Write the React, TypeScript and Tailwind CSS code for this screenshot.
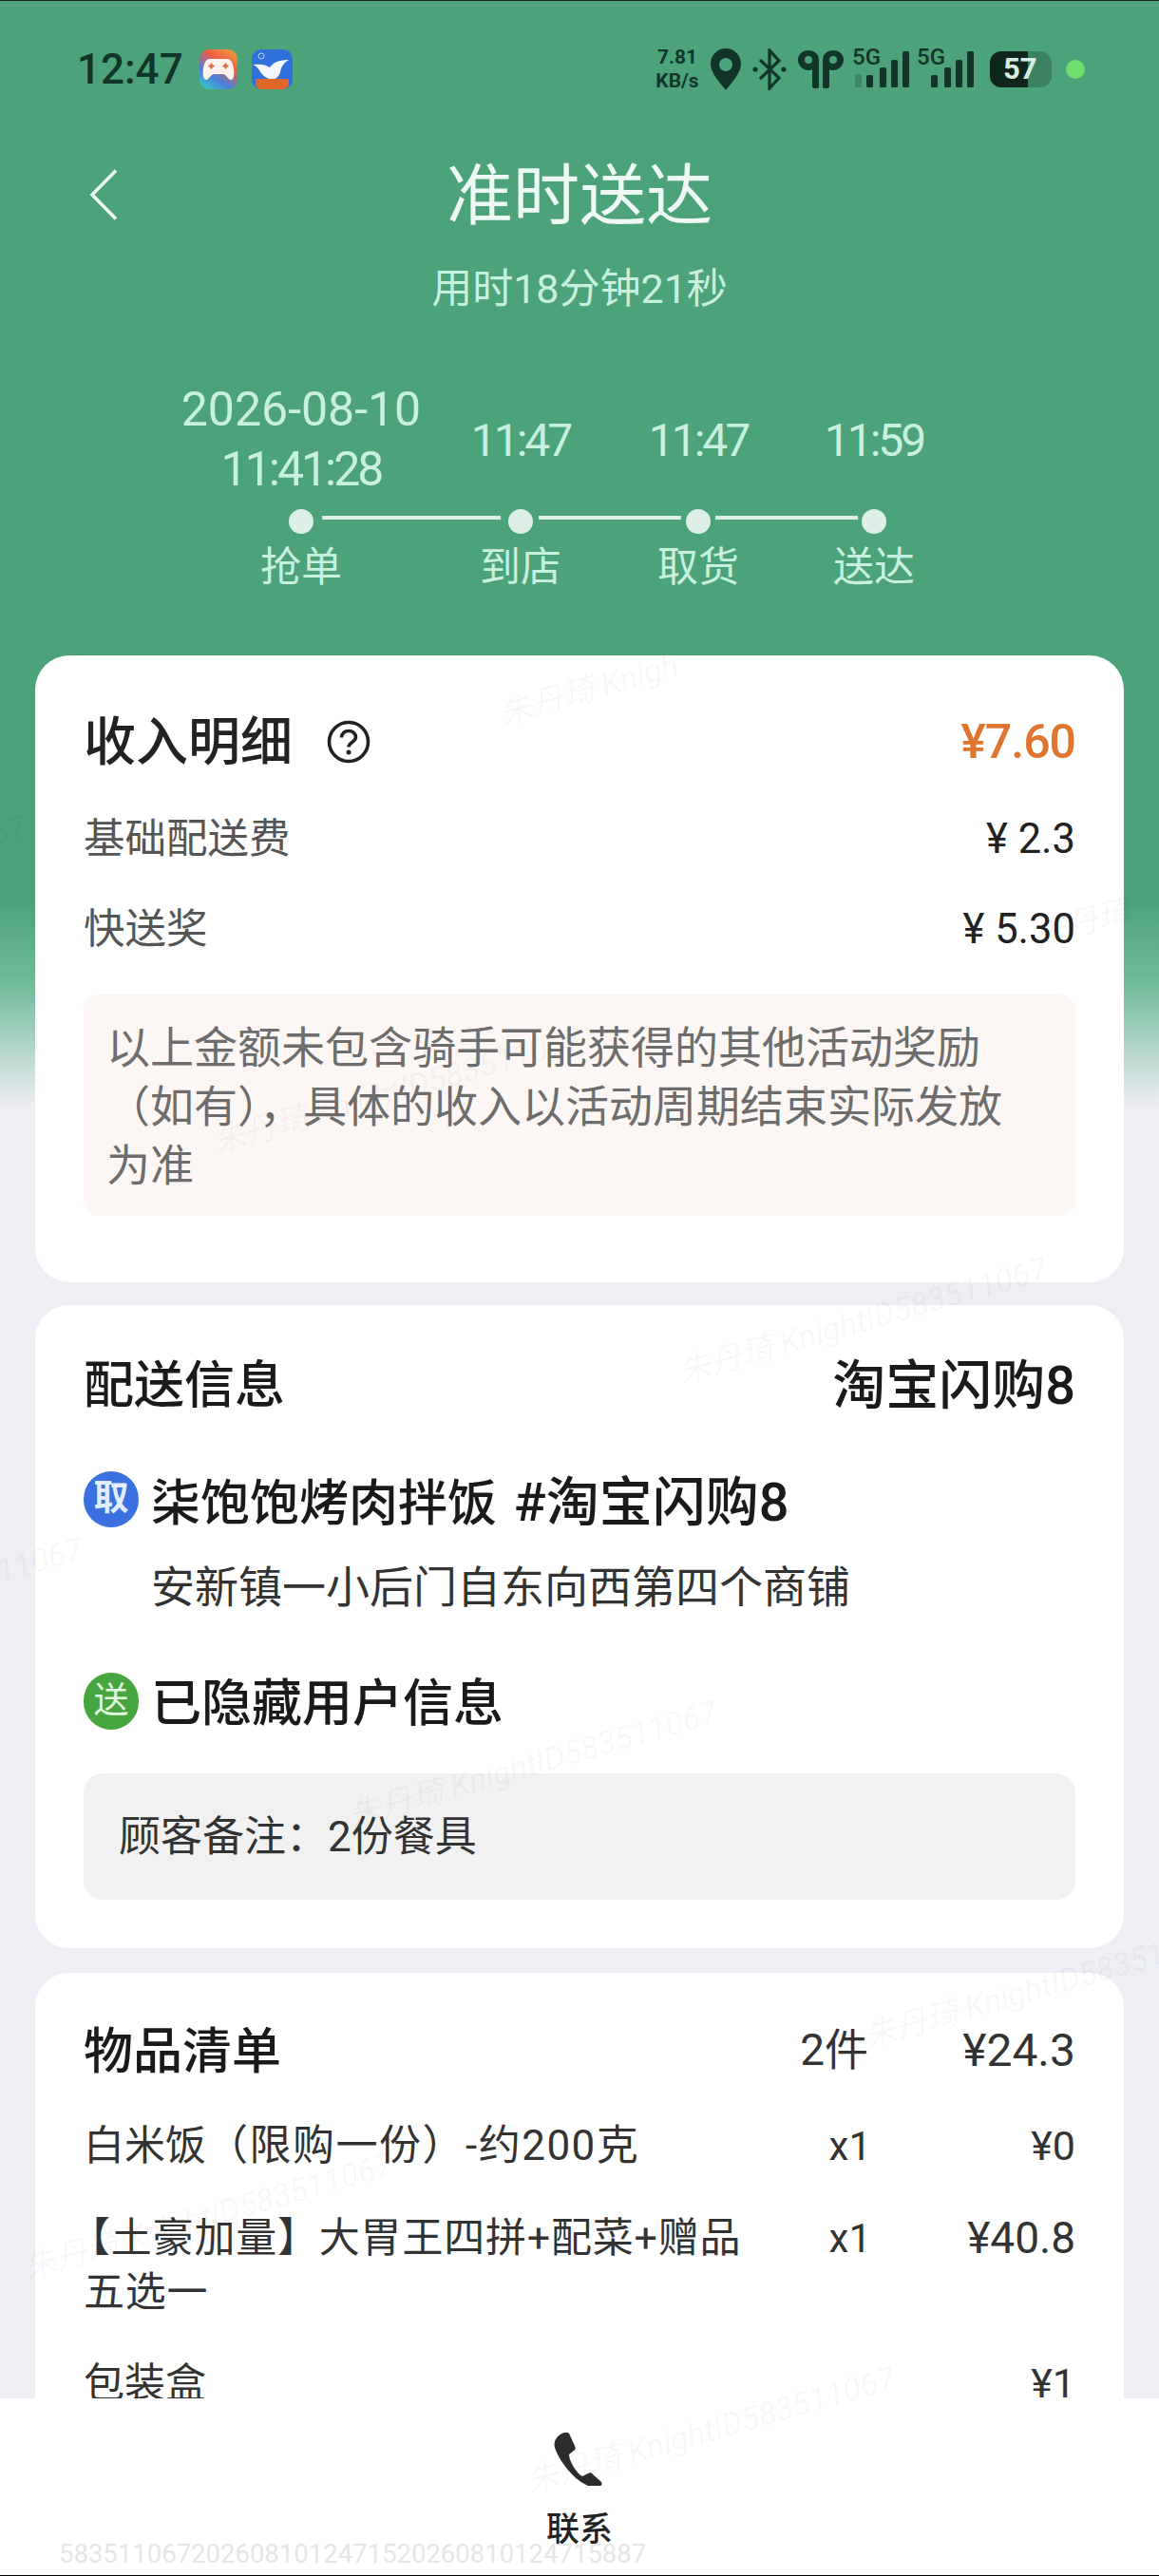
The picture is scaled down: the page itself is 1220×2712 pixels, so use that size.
const segments = [
  { slot: 205, line: 188 },
  { slot: 161, line: 150 },
  { slot: 159, line: 150 },
];

function GameIcon() {
  return (
    <svg width="40" height="42" viewBox="0 0 40 42">
      <defs>
        <linearGradient id="gameBg" x1="0.9" y1="0" x2="0.3" y2="1">
          <stop offset="0" stopColor="#f0a03c" />
          <stop offset="0.35" stopColor="#ee5f42" />
          <stop offset="0.75" stopColor="#4a7fdc" />
          <stop offset="1" stopColor="#3fb8c8" />
        </linearGradient>
      </defs>
      <rect width="40" height="42" rx="10" fill="url(#gameBg)" />
      <path d="M11 10h18c4 0 6 4 7 10 1 7 0 12-3 12-3 0-5-6-8-6H15c-3 0-5 6-8 6-3 0-4-5-3-12 1-6 3-10 7-10z" fill="#fdf3ec" />
      <path d="M11.500 14.500h2v2h2v2h-2v2h-2v-2h-2v-2h2zM26.500 14.500h2v2h2v2h-2v2h-2v-2h-2v-2h2z" fill="#e2603f" />
    </svg>
  );
}

function CourierIcon() {
  return (
    <svg width="43" height="42" viewBox="0 0 43 42">
      <rect width="43" height="42" rx="10" fill="#2f6fdc" />
      <path d="M1 16c8-1 14 0 18 3 4-6 11-8 20-8-5 3-8 7-9 13-1 4-4 7-8 8-7-1-12-6-14-10-2-3-4-5-7-6z" fill="#f4f8fd" />
      <circle cx="10" cy="7" r="3" fill="none" stroke="#bcd6f8" strokeWidth="1" />
      <path d="M4 31h35v5a6 6 0 0 1-6 6H10a6 6 0 0 1-6-6z" fill="#e0662a" />
    </svg>
  );
}

function SignalIcon({ faded }: { faded?: boolean }) {
  return (
    <div className="relative w-[60px] h-[44px]">
      <span className="absolute left-0 top-[-3px] text-[24px] leading-[24px] font-medium text-[#12352a]">5G</span>
      <svg className="absolute left-0 top-0" width="60" height="44" viewBox="0 0 60 44">
        {faded && <rect x="3" y="27" width="7" height="14" rx="2" fill="#12352a" opacity="0.25" />}
        <rect x="15" y="28" width="7" height="13" rx="1.500" fill="#12352a" />
        <rect x="29" y="20" width="7" height="21" rx="1.500" fill="#12352a" />
        <rect x="41" y="12" width="7" height="29" rx="1.500" fill="#12352a" />
        <rect x="53" y="3" width="7" height="38" rx="1.500" fill="#12352a" />
      </svg>
    </div>
  );
}

function StatusBar() {
  return (
    <div className="flex items-center justify-between h-[46px] mt-[49px] pl-[81px] pr-[78px] text-[#12352a]">
      <div className="flex items-center">
        <span className="text-[44px] leading-[46px] font-medium w-[129px]">12:47</span>
        <GameIcon />
        <div className="ml-[15px]">
          <CourierIcon />
        </div>
      </div>
      <div className="flex items-center">
        <div className="flex flex-col items-center w-[50px] font-bold text-[21px] leading-[25px]">
          <span>7.81</span>
          <span>KB/s</span>
        </div>
        <svg className="ml-[10px]" width="32" height="44" viewBox="0 0 32 44">
          <path fillRule="evenodd" d="M16 0C7 0 0 7 0 16c0 11 11 21 16 28 5-7 16-17 16-28C32 7 25 0 16 0zm0 10a7 7 0 1 1 0 14 7 7 0 0 1 0-14z" fill="#12352a" />
        </svg>
        <svg className="ml-[12px]" width="36" height="44" viewBox="0 0 36 44">
          <path d="M8 12l20 19-10 11V2l10 11L8 32" fill="none" stroke="#12352a" strokeWidth="3.200" />
          <circle cx="3" cy="22" r="2.600" fill="#12352a" />
          <circle cx="33" cy="22" r="2.600" fill="#12352a" />
        </svg>
        <svg className="ml-[12px]" width="48" height="40" viewBox="0 0 48 40">
          <path fillRule="evenodd" d="M11 0c6 0 11 4 11 10v28a2 2 0 0 1-2 2h-3a2 2 0 0 1-2-2V20c-2 1-3 1-4 1C5 21 0 16 0 10 0 4 5 0 11 0zm0 6a4 4 0 1 0 0 8 4 4 0 0 0 0-8z" fill="#12352a" />
          <path fillRule="evenodd" d="M37 0c-6 0-11 4-11 10v28a2 2 0 0 0 2 2h3a2 2 0 0 0 2-2V20c2 1 3 1 4 1 6 0 11-5 11-11 0-6-5-10-11-10zm0 6a4 4 0 1 1 0 8 4 4 0 0 1 0-8z" fill="#12352a" />
        </svg>
        <div className="ml-[9px]">
          <SignalIcon faded />
        </div>
        <div className="ml-[8px]">
          <SignalIcon />
        </div>
        <div className="ml-[17px] relative w-[65px] h-[38px] rounded-[12px] bg-[#3a8262] overflow-hidden flex-none">
          <div className="w-[40px] h-full bg-[#10251c]" />
          <span className="absolute left-[14px] top-0 text-[31px] leading-[38px] font-bold text-[#d5eee2]">57</span>
        </div>
        <div className="ml-[15px] w-[20px] h-[20px] rounded-full bg-[#6fdc6f]" />
      </div>
    </div>
  );
}

function Timeline() {
  return (
    <>
      <div className="grid grid-cols-[258px_204px_170px_200px] ml-[188px] mt-[71px] h-[126px] items-center text-center text-[50px] leading-[63px] text-[#c8f0de]">
        <div>
          <div>2026-08-10</div>
          <div className="tracking-[-3px]">11:41:28</div>
        </div>
        <div className="text-[48px] tracking-[-3px]">11:47</div>
        <div className="text-[48px] tracking-[-3px]">11:47</div>
        <div className="text-[48px] tracking-[-3px]">11:59</div>
      </div>
      <div className="flex items-center h-[26px] mt-[10px] ml-[304px]">
        <div className="w-[26px] h-[26px] rounded-full bg-[#deefe8]" />
        {segments.map((s, i) => (
          <div key={i} className="flex items-center">
            <div className="flex justify-center" style={{ width: s.slot }}>
              <div className="h-[4px] mb-[8px] bg-[#deefe8]" style={{ width: s.line }} />
            </div>
            <div className="w-[26px] h-[26px] rounded-full bg-[#deefe8]" />
          </div>
        ))}
      </div>
      <div className="grid grid-cols-[258px_204px_170px_200px] ml-[188px] mt-[10px] h-[50px] items-center text-center text-[43px] leading-[50px] text-[#c8f0de]">
        <div>抢单</div>
        <div>到店</div>
        <div>取货</div>
        <div>送达</div>
      </div>
    </>
  );
}

function IncomeCard() {
  return (
    <div className="mx-[37px] mt-[68px] rounded-[36px] bg-white px-[51px] pt-[61px] pb-[70px]">
      <div className="flex items-center justify-between h-[60px]">
        <div className="flex items-center">
          <span className="text-[55px] leading-[60px] font-medium text-[#222]">收入明细</span>
          <svg className="ml-[36px]" width="46" height="46" viewBox="0 0 46 46">
            <circle cx="23" cy="23" r="20.500" fill="none" stroke="#222" strokeWidth="3.600" />
            <path d="M15.500 18.500c0-4.500 3.500-7 7.500-7s7.500 2.600 7.500 6.500c0 5.500-7.500 5.500-7.500 10.500" fill="none" stroke="#222" strokeWidth="3.600" />
            <circle cx="23" cy="34" r="2.500" fill="#222" />
          </svg>
        </div>
        <span className="text-[50px] leading-[60px] tracking-[-1px] font-medium text-[#e0752f]">¥7.60</span>
      </div>
      <div className="flex items-center justify-between h-[60px] mt-[43px] text-[43.5px] leading-[60px]">
        <span className="text-[#555]">基础配送费</span>
        <span className="text-[#222]">¥ 2.3</span>
      </div>
      <div className="flex items-center justify-between h-[60px] mt-[35px] text-[43.5px] leading-[60px]">
        <span className="text-[#555]">快送奖</span>
        <span className="text-[#222]">¥ 5.30</span>
      </div>
      <div className="mt-[38px] rounded-[16px] bg-[#fcf7f4] pl-[24px] pr-[20px] pt-[25px] pb-[22px] text-[46px] leading-[62px] text-[#6d6d6d]">
        以上金额未包含骑手可能获得的其他活动奖励
        <br />
        （如有），具体的收入以活动周期结束实际发放
        <br />
        为准
      </div>
    </div>
  );
}

function DeliveryCard() {
  return (
    <div className="mx-[37px] mt-[24px] rounded-[36px] bg-white px-[51px] pt-[55px] pb-[51px]">
      <div className="flex items-center justify-between h-[60px] font-medium text-[#1a1a1a]">
        <span className="text-[53px] leading-[60px]">配送信息</span>
        <span className="text-[56px] leading-[60px]">淘宝闪购8</span>
      </div>
      <div className="flex items-center h-[60px] mt-[64px]">
        <div className="w-[58px] h-[59px] -translate-y-[5px] rounded-full bg-[#3a70e0] flex items-center justify-center text-[37px] font-bold text-[#e3eefc]">
          取
        </div>
        <span className="ml-[13px] text-[52px] leading-[60px] font-medium text-[#1a1a1a] whitespace-nowrap">
          柒饱饱烤肉拌饭 <span className="ml-[5px] text-[56px]">#淘宝闪购8</span>
        </span>
      </div>
      <div className="h-[60px] mt-[28px] pl-[71px] text-[46px] leading-[60px] text-[#333]">安新镇一小后门自东向西第四个商铺</div>
      <div className="flex items-center h-[60px] mt-[63px]">
        <div className="w-[58px] h-[60px] -translate-y-[3px] rounded-full bg-[#46a53e] flex items-center justify-center text-[37px] text-[#e3f6df]">
          送
        </div>
        <span className="ml-[13px] text-[53px] leading-[60px] font-medium text-[#1a1a1a]">已隐藏用户信息</span>
      </div>
      <div className="flex items-center mt-[43px] h-[133px] rounded-[20px] bg-[#f1f1f2] pl-[37px] text-[44px] text-[#333]">
        顾客备注：2份餐具
      </div>
    </div>
  );
}

function GoodsCard() {
  return (
    <div className="mx-[37px] mt-[26px] rounded-t-[36px] bg-white px-[51px] pt-[54px] text-[43px] leading-[57px] text-[#333]">
      <div className="flex items-center h-[60px] text-[#1a1a1a]">
        <span className="w-[700px] text-[52px] leading-[60px] font-medium">物品清单</span>
        <span className="w-[126px] -translate-y-[3px] text-right text-[46px] text-[#333]">2件</span>
        <span className="flex-1 -translate-y-[3px] text-right text-[48px] text-[#333]">¥24.3</span>
      </div>
      <div className="flex items-center h-[60px] mt-[38px]">
        <span className="w-[700px]">
          白米饭<span className="text-[44px] tracking-[1.5px]">（限购一份）-约200克</span>
        </span>
        <span className="w-[129px] text-right text-[42px]">x1</span>
        <span className="flex-1 text-right">¥0</span>
      </div>
      <div className="flex items-start mt-[39px]">
        <span className="w-[700px] indent-[-15px] tracking-[0.8px]">【土豪加量】大胃王四拼+配菜+赠品五选一</span>
        <span className="w-[129px] text-right text-[42px]">x1</span>
        <span className="flex-1 text-right text-[46px]">¥40.8</span>
      </div>
      <div className="flex items-center justify-between h-[60px] mt-[37px]">
        <span>包装盒</span>
        <span>¥1</span>
      </div>
    </div>
  );
}

function BottomBar() {
  return (
    <div className="relative h-[186px] flex-none bg-white flex flex-col items-center">
      <svg className="mt-[36px]" width="56" height="56" viewBox="0 0 56 56">
        <path d="M12 0c3-1 5 0 6 3l5 11c1 2 1 4-1 5l-5 4c0 7 8 20 14 23l6-3c2-1 4-1 5 1l8 7c2 2 2 4 0 5-4 3-10 2-15-1C20 48 6 28 2 16 0 9 5 2 12 0z" fill="#2c2c2c" />
      </svg>
      <span className="mt-[26px] text-[35px] leading-[42px] font-medium text-[#222]">联系</span>
      <span className="absolute left-[62px] top-[149px] text-[27.5px] leading-[30px] text-[#e6e6e6]">5835110672026081012471520260810124715887</span>
    </div>
  );
}

function Watermarks() {
  const text = "朱丹琦 KnightID583511067";
  const base = "absolute origin-left -rotate-[16deg] whitespace-nowrap text-[34px] leading-[40px] italic text-black/[0.035] pointer-events-none";
  return (
    <>
      <span className={`${base} left-[527px] top-[732px]`}>朱丹琦 Knigh</span>
      <span className={`${base} left-[-360px] top-[960px]`}>{text}</span>
      <span className={`${base} left-[715px] top-[1425px]`}>{text}</span>
      <span className={`${base} left-[225px] top-[1183px]`}>{text}</span>
      <span className={`${base} left-[-300px] top-[1720px]`}>{text}</span>
      <span className={`${base} left-[368px] top-[1892px]`}>{text}</span>
      <span className={`${base} left-[910px] top-[2125px]`}>{text}</span>
      <span className={`${base} left-[26px] top-[2368px]`}>{text}</span>
      <span className={`${base} left-[555px] top-[2593px]`}>{text}</span>
      <span className={`${base} left-[1090px] top-[965px]`}>朱丹琦</span>
    </>
  );
}

export default function App() {
  return (
    <div className="relative w-[1220px] h-[2712px] flex flex-col overflow-hidden font-[Roboto,'Noto_Sans_CJK_SC',sans-serif] bg-[linear-gradient(180deg,#4ca37a_0,#4ca37a_950px,#72bc9b_1037px,#eeeef5_1165px)]">
      <div className="h-[1px] flex-none bg-[#1a2a20]" />
      <div className="flex-1 min-h-0 overflow-hidden">
        <StatusBar />
        <div className="relative flex items-center justify-center h-[80px] mt-[71px]">
          <svg className="absolute left-[94px] top-[11px]" width="30" height="54" viewBox="0 0 30 54">
            <path d="M28 1.500L3 27l25 25.500" fill="none" stroke="#eef8f4" strokeWidth="3.500" />
          </svg>
          <span className="text-[70px] leading-[80px] text-[#eef8f4]">准时送达</span>
        </div>
        <div className="h-[50px] mt-[32px] text-center text-[43px] leading-[50px] text-[#c8f0de]">用时18分钟21秒</div>
        <Timeline />
        <IncomeCard />
        <DeliveryCard />
        <GoodsCard />
      </div>
      <BottomBar />
      <div className="h-[1px] flex-none bg-black" />
      <Watermarks />
    </div>
  );
}
